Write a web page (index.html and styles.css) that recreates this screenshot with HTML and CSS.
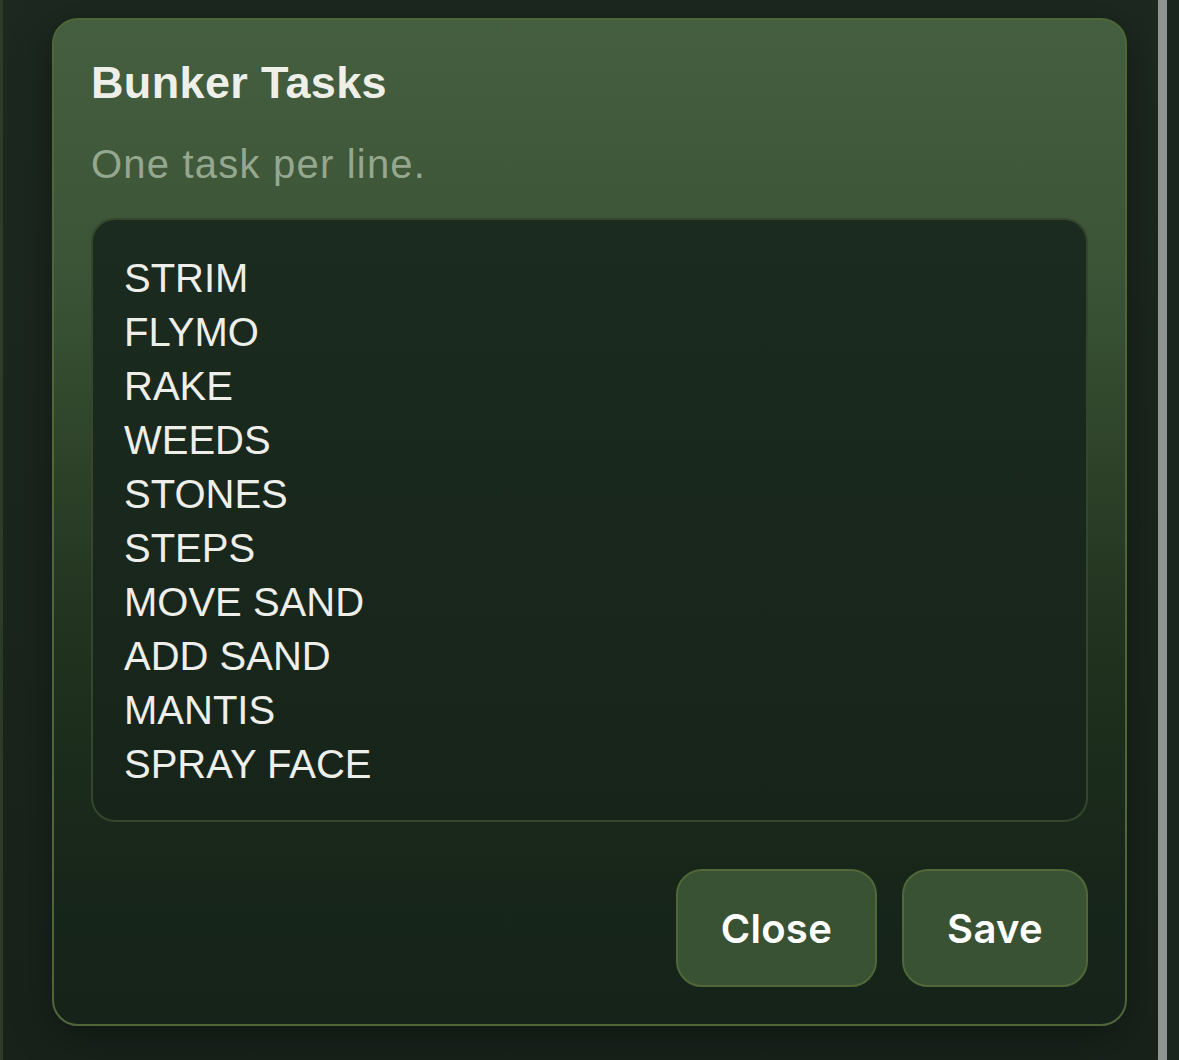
FILE: index.html
```html
<!DOCTYPE html>
<html lang="en">
<head>
<meta charset="utf-8">
<title>Bunker Tasks</title>
<link rel="stylesheet" href="styles.css">
</head>
<body>
<div class="page">
  <div class="edge-left"></div>
  <main class="stage">
    <section class="card">
      <h1 class="title">Bunker Tasks</h1>
      <p class="hint">One task per line.</p>
      <textarea class="tasks" spellcheck="false">STRIM
FLYMO
RAKE
WEEDS
STONES
STEPS
MOVE SAND
ADD SAND
MANTIS
SPRAY FACE</textarea>
      <div class="actions">
        <button class="btn" type="button">Close</button>
        <button class="btn" type="button">Save</button>
      </div>
    </section>
  </main>
  <div class="scrollbar"></div>
  <div class="edge-right"></div>
</div>
</body>
</html>
```
FILE: styles.css
```css
* { box-sizing: border-box; }
html, body { margin: 0; padding: 0; }
body {
  width: 1179px;
  height: 1060px;
  overflow: hidden;
  background: #1b251f;
  font-family: "Liberation Sans", Arial, sans-serif;
}
.page {
  display: flex;
  height: 1060px;
  background: linear-gradient(180deg, #1c2820 0%, #18221b 100%);
}
.edge-left {
  width: 3px;
  background: #2e3b25;
  flex: none;
}
.stage {
  flex: none;
  width: 1155px;
  padding: 18px 28px 0 49px;
}
.card {
  width: 1075px;
  height: 1008px;
  border: 2px solid #4f6638;
  border-radius: 26px;
  padding: 37px;
  background: linear-gradient(180deg, #445f3f 0%, #3b5436 25%, #22331f 60%, #172619 85%, #15231a 100%);
  box-shadow: 0 10px 40px rgba(0, 0, 0, 0.35);
  display: flex;
  flex-direction: column;
}
.title {
  margin: 0;
  font-size: 45px;
  font-weight: 700;
  line-height: 52px;
  letter-spacing: 0.35px;
  color: #efefea;
}
.hint {
  margin: 32px 0 0;
  font-size: 40px;
  line-height: 46px;
  letter-spacing: 1.2px;
  color: #95a78e;
}
.tasks {
  display: block;
  margin: 31px 0 0;
  width: 997px;
  height: 604px;
  border: 2px solid #34472c;
  border-radius: 24px;
  padding: 31px 31px;
  background: linear-gradient(180deg, #1c2b1f 0%, #16241a 100%);
  color: #eeeeea;
  font-family: "Liberation Sans", Arial, sans-serif;
  font-size: 40px;
  line-height: 54px;
  resize: none;
  overflow: hidden;
  outline: none;
}
.actions {
  margin-top: 47px;
  display: flex;
  justify-content: flex-end;
  gap: 25px;
}
.btn {
  height: 118px;
  padding: 0 43px;
  border: 2px solid #506739;
  border-radius: 26px;
  background: #3a5234;
  color: #ffffff;
  font-family: Inter, "Liberation Sans", sans-serif;
  font-size: 40px;
  font-weight: 600;
  letter-spacing: 0.3px;
  cursor: pointer;
}
.scrollbar {
  flex: none;
  width: 9px;
  background: #8e9590;
}
.edge-right {
  flex: 1;
  background: #1b261f;
}
```
